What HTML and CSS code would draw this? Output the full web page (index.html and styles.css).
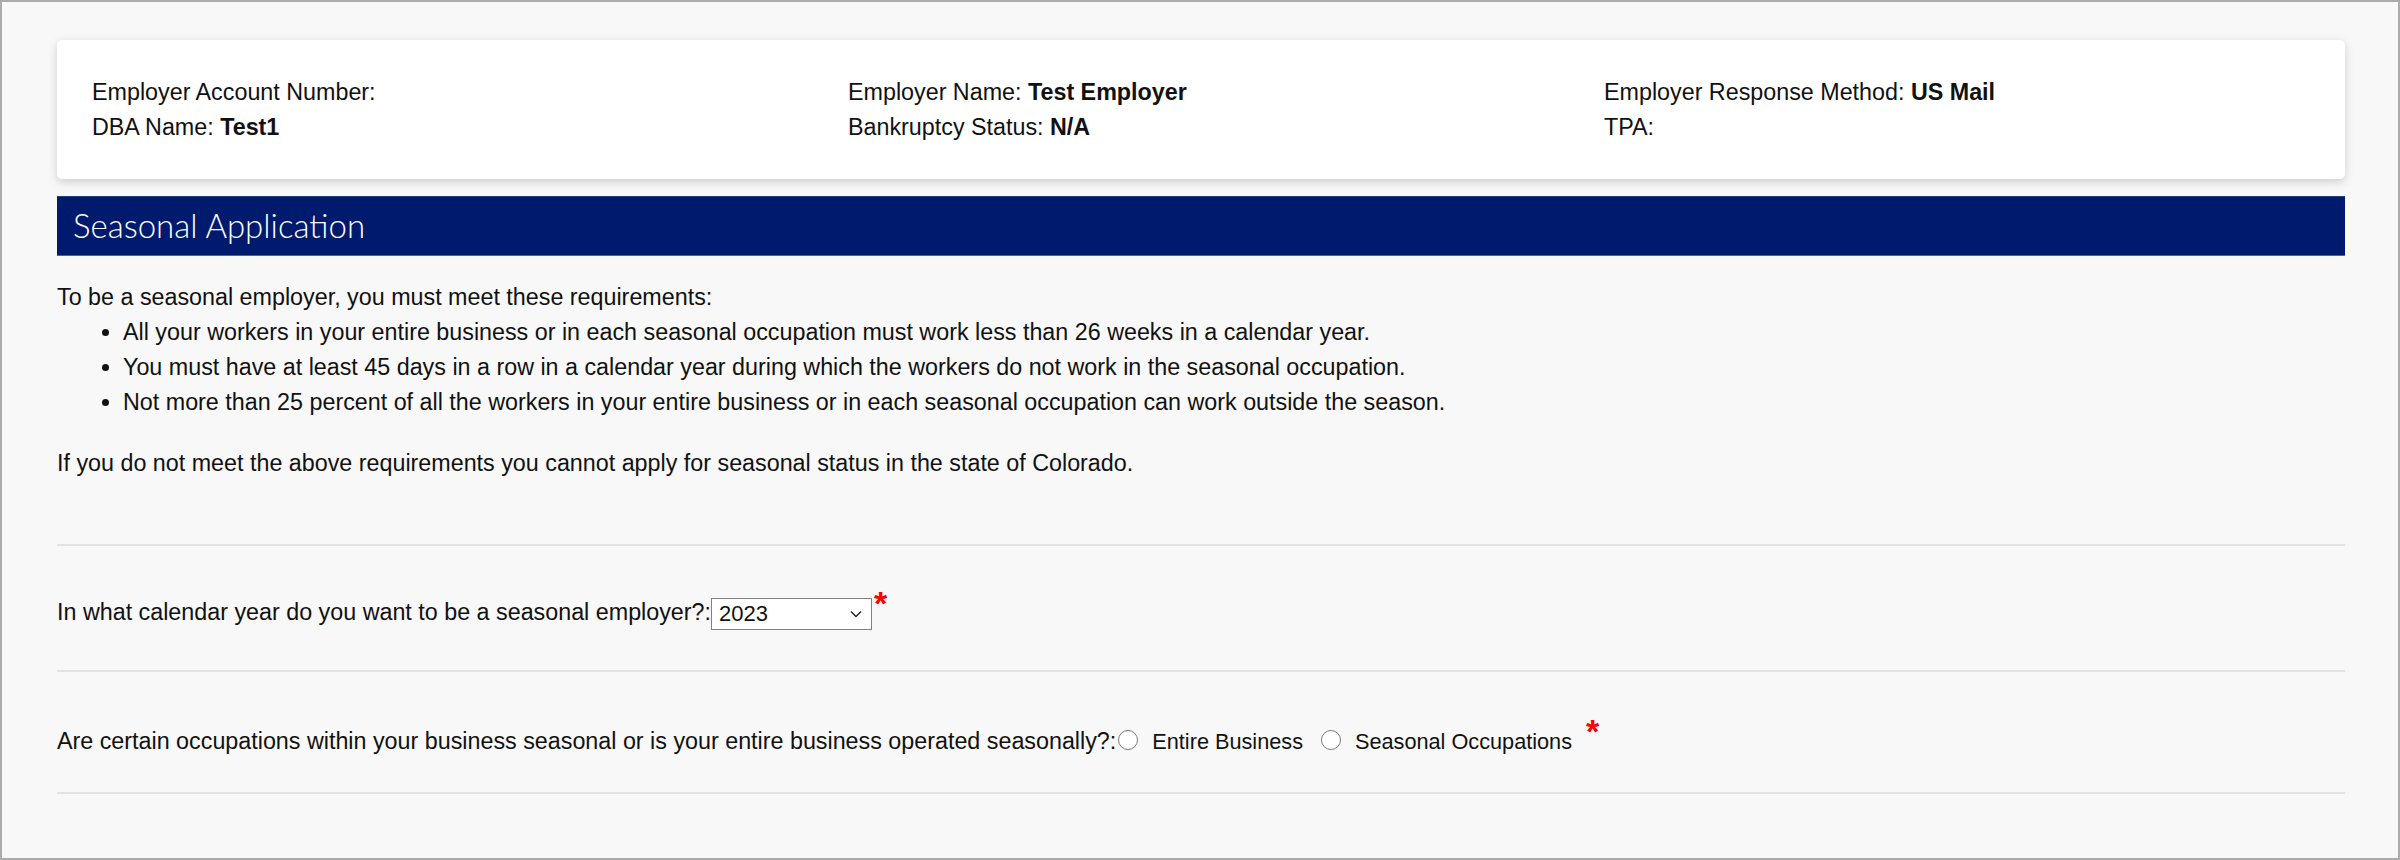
FILE: index.html
```html
<!DOCTYPE html>
<html lang="en">
<head>
<meta charset="utf-8">
<title>Seasonal Application</title>
<link rel="stylesheet" href="styles.css">
</head>
<body>
<div class="frame">
  <div class="card">
    <div class="info-grid">
      <div class="info-col">
        <div>Employer Account Number:</div>
        <div>DBA Name: <b>Test1</b></div>
      </div>
      <div class="info-col">
        <div>Employer Name: <b>Test Employer</b></div>
        <div>Bankruptcy Status: <b>N/A</b></div>
      </div>
      <div class="info-col">
        <div>Employer Response Method: <b>US Mail</b></div>
        <div>TPA:</div>
      </div>
    </div>
  </div>

  <h2 class="section-title">Seasonal Application</h2>

  <div class="intro">
    <p class="lead">To be a seasonal employer, you must meet these requirements:</p>
    <ul class="reqs">
      <li>All your workers in your entire business or in each seasonal occupation must work less than 26 weeks in a calendar year.</li>
      <li>You must have at least 45 days in a row in a calendar year during which the workers do not work in the seasonal occupation.</li>
      <li>Not more than 25 percent of all the workers in your entire business or in each seasonal occupation can work outside the season.</li>
    </ul>
    <p class="note">If you do not meet the above requirements you cannot apply for seasonal status in the state of Colorado.</p>
  </div>

  <div class="field-row field-year">
    <span class="field-label">In what calendar year do you want to be a seasonal employer?:</span><span class="select"><span class="select-value">2023</span><svg class="chev" width="14" height="10" viewBox="0 0 14 10"><path d="M2 2.5 L7 7.5 L12 2.5" fill="none" stroke="#222" stroke-width="1.4"/></svg></span><span class="req req-year">*</span>
  </div>

  <div class="field-row field-type">
    <span class="field-label">Are certain occupations within your business seasonal or is your entire business operated seasonally?:</span><span class="radio radio-first"></span><span class="radio-label">Entire Business</span><span class="radio"></span><span class="radio-label">Seasonal Occupations</span><span class="req req-type">*</span>
  </div>
  <div class="divider"></div>
</div>
</body>
</html>
```

FILE: styles.css
```css
html, body {
  margin: 0;
  padding: 0;
}

body {
  font-family: "Liberation Sans", Arial, sans-serif;
  color: #111;
  background: #f8f8f8;
}

.frame {
  box-sizing: border-box;
  width: 2400px;
  height: 860px;
  border: 2px solid #ababab;
  background: #f8f8f8;
  padding: 38px 53px 0 55px;
  font-size: 23.3px;
  line-height: 35px;
}

.card {
  background: #fff;
  border-radius: 5px;
  box-shadow: 0 3px 10px rgba(0, 0, 0, 0.17);
  padding: 35px 0 34px 20px;
}

.info-grid {
  display: grid;
  grid-template-columns: repeat(3, 1fr);
}

.info-col {
  padding: 0 15px;
}

.section-title {
  margin: 17px 0 0;
  height: 60px;
  box-sizing: border-box;
  background: #001a6e;
  border-top: 1px solid #23407e;
  border-bottom: 1px solid #3d6d8b;
  color: #fff;
  font-family: Lato, "Liberation Sans", sans-serif;
  font-weight: 300;
  font-size: 33px;
  line-height: 56px;
  padding: 0 16px;
}

.intro {
  margin-top: 24px;
}

.intro p {
  margin: 0;
}

.reqs {
  margin: 0;
  padding-left: 66px;
}

.intro .note {
  margin-top: 26px;
}

.field-row {
  margin-top: 63px;
  border-top: 2px solid #e2e2e2;
  padding: 49px 0 0;
  height: 126px;
  box-sizing: border-box;
}

.field-row + .field-row {
  margin-top: 0;
  height: 122px;
  padding-top: 52px;
}

.select {
  display: inline-flex;
  align-items: center;
  justify-content: space-between;
  box-sizing: border-box;
  width: 161px;
  height: 32px;
  border: 1px solid #808080;
  background: #fff;
  padding: 0 8px 0 7px;
  font-size: 22px;
  vertical-align: -1px;
  line-height: 30px;
}

.chev {
  display: block;
}

.req {
  color: #ff0000;
  font-weight: bold;
  font-size: 34px;
  line-height: 1;
  display: inline-block;
  vertical-align: top;
}

.req-year {
  margin-left: 2px;
  margin-top: -9px;
}

.req-type {
  margin-left: 14px;
  margin-top: -10px;
}

.radio {
  display: inline-block;
  box-sizing: border-box;
  width: 20px;
  height: 20px;
  border: 1px solid #7a7a7a;
  border-radius: 50%;
  background: #fff;
  vertical-align: -1px;
  margin: 0 14px 0 18px;
}

.radio-first {
  margin-left: 2px;
}

.radio-label {
  font-size: 21.7px;
}

.divider {
  border-top: 2px solid #e2e2e2;
}
```
